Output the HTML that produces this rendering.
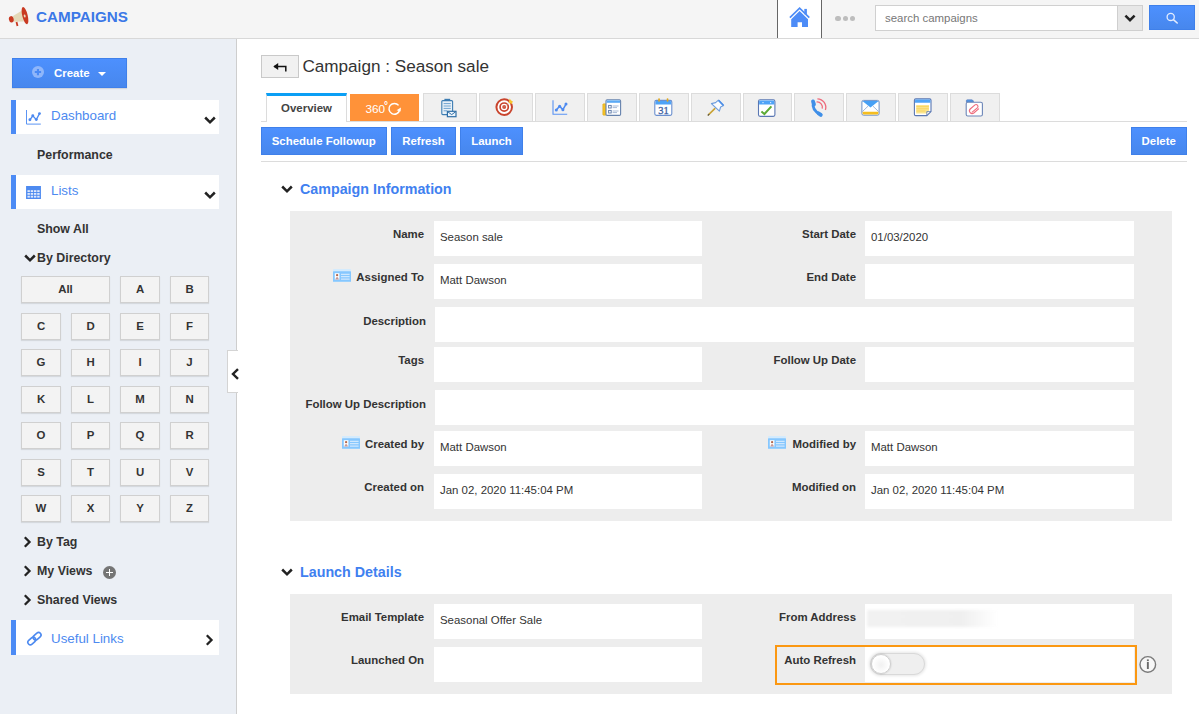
<!DOCTYPE html>
<html><head><meta charset="utf-8"><title>Campaigns</title>
<style>
*{box-sizing:border-box;margin:0;padding:0}
html,body{width:1199px;height:714px;overflow:hidden;background:#fff;font-family:"Liberation Sans",sans-serif;font-size:13px;color:#333}
.abs{position:absolute}
#hdr{position:absolute;left:0;top:0;width:1199px;height:39px;background:#f5f5f5;border-bottom:1px solid #d8d8d8}
#side{position:absolute;left:0;top:39px;width:237px;height:675px;background:#ebeff5;border-right:1px solid #cecece}
.brand{position:absolute;left:36px;top:6.6px;font-size:15.24px;font-weight:bold;color:#3b78e7;line-height:20px}
.nav{position:absolute;left:11px;width:207.5px;height:34.3px;background:#fff;border-left:5px solid #4c8bf5;color:#4d8af0;font-size:13.33px;line-height:34px}
.nav span{position:absolute;left:35px;top:-0.9px}
.sub{position:absolute;font-weight:bold;font-size:12.38px;color:#333;line-height:16px}
.ltr{position:absolute;height:27px;background:#f3f3f3;border:1px solid #d0d0d0;box-shadow:0 1px 1px rgba(0,0,0,.09);font-weight:bold;font-size:11.43px;color:#333;text-align:center;line-height:25px}
.btn{position:absolute;top:127px;height:28.3px;background:linear-gradient(#4d90fe,#4787ed);border:1px solid #3f80ea;color:#fff;font-weight:bold;font-size:11.43px;line-height:26px;text-align:center}
.tab{position:absolute;top:93px;height:28px;background:#f0f0f0;border:1px solid #dcdcdc;border-bottom:none}
.sec{position:absolute;left:300px;font-size:14.29px;font-weight:bold;color:#4080f0;line-height:18px}
.panel{position:absolute;left:290px;width:882px;background:#ededed}
.lbl{position:absolute;font-weight:bold;font-size:11.43px;color:#333;text-align:right;line-height:14px}
.fld{position:absolute;height:35px;background:#fff;font-size:11.43px;color:#333;line-height:32px;padding-left:6px}
</style></head><body>
<div id="hdr">
<svg class="abs" style="left:0px;top:0px" width="36" height="36" viewBox="0 0 36 36">
<path d="M12.6 16.2 L22 10.4 L23.8 21.6 L13.6 21.8 Z" fill="#e4d9b8"/>
<ellipse cx="11.3" cy="19.3" rx="2.4" ry="3.2" transform="rotate(-12 11.3 19.3)" fill="#c93a22"/>
<path d="M15.6 22.2 L17.4 21.8 L18.4 25.8 L16.6 26.3 Z" fill="#c93a22"/>
<ellipse cx="25" cy="15.6" rx="2.7" ry="8.9" transform="rotate(-14 25 15.6)" fill="#c93a22"/>
<ellipse cx="24.7" cy="16" rx="0.9" ry="1.6" transform="rotate(-14 24.7 16)" fill="#ecdcc0"/>
</svg>
<div class="brand">CAMPAIGNS</div>
<div class="abs" style="left:777px;top:0;width:45px;height:38px;background:#fff;border-left:1px solid #666;border-right:1px solid #666"></div>
<svg class="abs" style="left:786px;top:4px" width="28" height="28" viewBox="786 4 28 28">
<path d="M789.9 17.6 L799.6 8.2 L809.3 17.6" fill="none" stroke="#4d8cf7" stroke-width="1.7"/>
<path d="M799.6 11 L808 19.2 V27.1 H802 V22.2 H797.6 V27.1 H791.2 V19.2 Z" fill="#4d8cf7"/>
<rect x="804.3" y="8.9" width="2.6" height="5.4" fill="#4d8cf7"/>
</svg>
<div class="abs" style="left:835.3px;top:15.5px;width:5.6px;height:5.6px;border-radius:3px;background:#bdbdbd"></div>
<div class="abs" style="left:842.6px;top:15.5px;width:5.6px;height:5.6px;border-radius:3px;background:#bdbdbd"></div>
<div class="abs" style="left:849.9px;top:15.5px;width:5.6px;height:5.6px;border-radius:3px;background:#bdbdbd"></div>
<div class="abs" style="left:875px;top:5px;width:243px;height:26px;background:#fff;border:1px solid #d0d0d0;font-size:11.43px;color:#777;line-height:24px;padding-left:9px">search campaigns</div>
<div class="abs" style="left:1117px;top:5px;width:26px;height:26px;background:#e7e7e7;border:1px solid #cfcfcf"></div>
<svg class="abs" style="left:1123.7px;top:14.2px" width="12" height="9" viewBox="0 0 12 9"><path d="M1.4 1.6 L6 6.2 L10.6 1.6" fill="none" stroke="#222" stroke-width="2.5"/></svg>
<div class="abs" style="left:1149px;top:5px;width:46px;height:25px;background:linear-gradient(#4d90fe,#4787ed);border:1px solid #3f80ea"></div>
<svg class="abs" style="left:1165px;top:10.5px" width="15" height="15" viewBox="0 0 15 15"><circle cx="5.7" cy="5.9" r="3.6" fill="none" stroke="#e3ecfe" stroke-width="1.3"/><path d="M8.4 8.6 L12.2 12" stroke="#e3ecfe" stroke-width="1.6" stroke-linecap="round"/></svg>
</div>
<div id="side"></div>
<div class="abs" style="left:12px;top:58px;width:115px;height:30px;background:linear-gradient(#4d90fe,#4787ed);border:1px solid #3f80ea;box-shadow:0 1px 1px rgba(0,0,0,.1)"></div>
<div class="abs" style="left:32.3px;top:66.4px;width:11.3px;height:11.3px;border-radius:6px;background:#8fb6fa"></div>
<svg class="abs" style="left:32px;top:66px" width="12" height="12" viewBox="0 0 12 12"><path d="M2.8 6.05 H9.1 M5.95 2.9 V9.2" stroke="#4a8af5" stroke-width="2.1"/></svg>
<div class="abs" style="left:54px;top:65px;font-size:11.43px;font-weight:bold;color:#fff;line-height:16px">Create</div>
<div class="abs" style="left:98px;top:72px;width:0;height:0;border-left:4px solid transparent;border-right:4px solid transparent;border-top:4px solid #fff"></div>
<div class="nav" style="top:100px"><span>Dashboard</span></div>
<svg class="abs" style="left:24px;top:106px" width="20" height="22" viewBox="24 106 20 22">
<path d="M26.5 110 V124.1 H40.8" fill="none" stroke="#5b94f3" stroke-width="1"/>
<path d="M29.9 119.8 L32.8 115.8 L36.3 119.6 L39.5 113.6" fill="none" stroke="#4d8af0" stroke-width="1.3"/>
<g fill="#4d8af0"><circle cx="29.9" cy="119.8" r="1.45"/><circle cx="32.8" cy="115.8" r="1.45"/><circle cx="36.3" cy="119.6" r="1.45"/><circle cx="39.5" cy="113.6" r="1.45"/></g>
</svg>
<svg class="abs" style="left:204px;top:116px" width="12" height="9" viewBox="0 0 12 9"><path d="M1.2 1.5 L6 6.3 L10.8 1.5" fill="none" stroke="#222" stroke-width="2.5"/></svg>
<div class="sub" style="left:37px;top:146.5px">Performance</div>
<div class="nav" style="top:175px"><span>Lists</span></div>
<svg class="abs" style="left:26px;top:186px" width="15" height="13" viewBox="0 0 16 14">
<rect x="0" y="0" width="16" height="14" fill="#4d8af0"/>
<g fill="#dfe9fc"><rect x="1.5" y="4.5" width="2.6" height="2"/><rect x="5" y="4.5" width="2.6" height="2"/><rect x="8.5" y="4.5" width="2.6" height="2"/><rect x="12" y="4.5" width="2.6" height="2"/>
<rect x="1.5" y="7.5" width="2.6" height="2"/><rect x="5" y="7.5" width="2.6" height="2"/><rect x="8.5" y="7.5" width="2.6" height="2"/><rect x="12" y="7.5" width="2.6" height="2"/>
<rect x="1.5" y="10.5" width="2.6" height="2"/><rect x="5" y="10.5" width="2.6" height="2"/><rect x="8.5" y="10.5" width="2.6" height="2"/><rect x="12" y="10.5" width="2.6" height="2"/></g>
</svg>
<svg class="abs" style="left:204px;top:191px" width="12" height="9" viewBox="0 0 12 9"><path d="M1.2 1.5 L6 6.3 L10.8 1.5" fill="none" stroke="#222" stroke-width="2.5"/></svg>
<div class="sub" style="left:37px;top:221px">Show All</div>
<svg class="abs" style="left:24px;top:254px" width="12" height="9" viewBox="0 0 12 9"><path d="M1.2 1.5 L6 6.3 L10.8 1.5" fill="none" stroke="#222" stroke-width="2.5"/></svg>
<div class="sub" style="left:37px;top:250px">By Directory</div>
<div class="ltr" style="left:21px;top:276px;width:89px">All</div>
<div class="ltr" style="left:120px;top:276px;width:40px">A</div>
<div class="ltr" style="left:170px;top:276px;width:39px">B</div>
<div class="ltr" style="left:21px;top:313px;width:40px">C</div>
<div class="ltr" style="left:71px;top:313px;width:39px">D</div>
<div class="ltr" style="left:120px;top:313px;width:40px">E</div>
<div class="ltr" style="left:170px;top:313px;width:39px">F</div>
<div class="ltr" style="left:21px;top:349px;width:40px">G</div>
<div class="ltr" style="left:71px;top:349px;width:39px">H</div>
<div class="ltr" style="left:120px;top:349px;width:40px">I</div>
<div class="ltr" style="left:170px;top:349px;width:39px">J</div>
<div class="ltr" style="left:21px;top:386px;width:40px">K</div>
<div class="ltr" style="left:71px;top:386px;width:39px">L</div>
<div class="ltr" style="left:120px;top:386px;width:40px">M</div>
<div class="ltr" style="left:170px;top:386px;width:39px">N</div>
<div class="ltr" style="left:21px;top:422px;width:40px">O</div>
<div class="ltr" style="left:71px;top:422px;width:39px">P</div>
<div class="ltr" style="left:120px;top:422px;width:40px">Q</div>
<div class="ltr" style="left:170px;top:422px;width:39px">R</div>
<div class="ltr" style="left:21px;top:459px;width:40px">S</div>
<div class="ltr" style="left:71px;top:459px;width:39px">T</div>
<div class="ltr" style="left:120px;top:459px;width:40px">U</div>
<div class="ltr" style="left:170px;top:459px;width:39px">V</div>
<div class="ltr" style="left:21px;top:495px;width:40px">W</div>
<div class="ltr" style="left:71px;top:495px;width:39px">X</div>
<div class="ltr" style="left:120px;top:495px;width:40px">Y</div>
<div class="ltr" style="left:170px;top:495px;width:39px">Z</div>
<svg class="abs" style="left:23px;top:536px" width="9" height="12" viewBox="0 0 9 12"><path d="M1.8 1.3 L6.5 6 L1.8 10.7" fill="none" stroke="#222" stroke-width="2.3"/></svg>
<div class="sub" style="left:37px;top:534px">By Tag</div>
<svg class="abs" style="left:23px;top:565px" width="9" height="12" viewBox="0 0 9 12"><path d="M1.8 1.3 L6.5 6 L1.8 10.7" fill="none" stroke="#222" stroke-width="2.3"/></svg>
<div class="sub" style="left:37px;top:563px">My Views</div>
<div class="abs" style="left:103px;top:566px;width:13px;height:13px;border-radius:7px;background:#757575"></div>
<div class="abs" style="left:106px;top:571.7px;width:7px;height:1.6px;background:#fff"></div><div class="abs" style="left:108.7px;top:569px;width:1.6px;height:7px;background:#fff"></div>
<svg class="abs" style="left:23px;top:594px" width="9" height="12" viewBox="0 0 9 12"><path d="M1.8 1.3 L6.5 6 L1.8 10.7" fill="none" stroke="#222" stroke-width="2.3"/></svg>
<div class="sub" style="left:37px;top:592px">Shared Views</div>
<div class="nav" style="top:620px;height:35px"><span style="top:1.6px">Useful Links</span></div>
<svg class="abs" style="left:26px;top:630px" width="18" height="18" viewBox="26 630 18 18">
<g fill="none" stroke="#4d8af0" stroke-width="1.6">
<rect x="-4.4" y="-2.5" width="8.8" height="5" rx="2.5" transform="translate(37.1 636.2) rotate(-42)"/>
<rect x="-4.4" y="-2.5" width="8.8" height="5" rx="2.5" transform="translate(31.8 641) rotate(-42)"/>
</g></svg>
<svg class="abs" style="left:205px;top:634px" width="9" height="12" viewBox="0 0 9 12"><path d="M1.8 1.3 L6.5 6 L1.8 10.7" fill="none" stroke="#222" stroke-width="2.3"/></svg>
<div class="abs" style="left:227px;top:350px;width:11px;height:43px;background:#fff;border:1px solid #d4d4d4;border-right:none"></div>
<svg class="abs" style="left:230.6px;top:367.6px" width="9" height="12" viewBox="0 0 9 12"><path d="M7 1.2 L2 6 L7 10.8" fill="none" stroke="#222" stroke-width="2.4"/></svg>
<div class="abs" style="left:261px;top:55px;width:38px;height:23px;background:#f1f1f1;border:1px solid #c9c9c9"></div>
<svg class="abs" style="left:272.8px;top:61.6px" width="15" height="11" viewBox="0 0 15 11"><path d="M1 4.5 H12.8 V9.6" fill="none" stroke="#111" stroke-width="1.5"/><path d="M0.3 4.5 L5.2 1.1 V7.9 Z" fill="#111"/></svg>
<div class="abs" style="left:302.4px;top:54px;font-size:17.14px;color:#333;line-height:24px">Campaign : Season sale</div>
<div class="abs" style="left:261px;top:121px;width:926px;height:1px;background:#dcdcdc"></div>
<div class="abs" style="left:266px;top:93px;width:81px;height:29px;background:#fff;border:1px solid #dcdcdc;border-top:3px solid #0a9ff5;border-bottom:none;font-size:11.43px;font-weight:bold;color:#444;text-align:center;line-height:25px">Overview</div>
<div class="abs" style="left:350px;top:94px;width:69px;height:27px;background:#ff9239"></div>
<div class="abs" style="left:365.5px;top:102.3px;font-size:11.8px;color:#fff;line-height:14px">360</div>
<div class="abs" style="left:384px;top:100.5px;font-size:10px;font-weight:bold;color:#fff;line-height:10px">°</div>
<svg class="abs" style="left:387px;top:101px" width="16" height="16" viewBox="0 0 16 16"><path d="M11.6 4.4 A5.4 5.4 0 1 0 12.6 9.2" fill="none" stroke="#fff" stroke-width="1.5"/><path d="M9.6 9.2 L13.6 10.6 L13.9 6.6 Z" fill="#fff"/></svg>
<div class="tab" style="left:422.5px;width:54px"></div>
<div class="tab" style="left:479px;width:54px"></div>
<div class="tab" style="left:535px;width:50px"></div>
<div class="tab" style="left:587px;width:50px"></div>
<div class="tab" style="left:639px;width:50px"></div>
<div class="tab" style="left:690.5px;width:50px"></div>
<div class="tab" style="left:742.5px;width:49.5px"></div>
<div class="tab" style="left:794px;width:50px"></div>
<div class="tab" style="left:846px;width:50px"></div>
<div class="tab" style="left:898px;width:49.5px"></div>
<div class="tab" style="left:950px;width:50px"></div>
<svg class="abs" style="left:420px;top:93px" width="590" height="30" viewBox="420 93 590 30">
<!-- clipboard + mail -->
<g fill="none" stroke="#3d7db3" stroke-width="1.1">
<rect x="441.8" y="100.6" width="10.8" height="14" rx="1" fill="#e8f1f8"/>
<path d="M444.4 99.5 H450.2" stroke-width="1.4"/>
<path d="M443.6 103.6 H450.8 M443.6 106 H450.8 M443.6 108.4 H450.8 M443.6 110.8 H447" stroke="#6fa3cf" stroke-width="1"/>
<rect x="447.4" y="111.3" width="8.6" height="5.4" fill="#eef5fb" stroke="#2f6ea6" stroke-width="1.2"/>
<path d="M447.8 111.8 L451.7 114.6 L455.6 111.8" stroke="#2f6ea6" stroke-width="1"/>
</g>
<!-- bullseye -->
<g>
<circle cx="504.2" cy="107.1" r="7.8" fill="#fff" stroke="#c9442d" stroke-width="2"/>
<circle cx="504.2" cy="107.1" r="4.1" fill="#fff" stroke="#c9442d" stroke-width="1.7"/>
<circle cx="504.2" cy="107.1" r="2" fill="#cf5a44"/>
<path d="M505 106.4 L510 101.2" stroke="#d9b9a9" stroke-width="0.8"/>
<path d="M508.8 102.8 L509.6 98.6 L511.2 100.4 L512.9 101.6 L511.6 104 Z" fill="#f7c62f"/>
</g>
<!-- chart -->
<g fill="none" stroke="#4d8af0">
<path d="M553 100.3 V114.2 H567.2" stroke-width="1.1" stroke="#5a93f3"/>
<path d="M556.3 109.9 L559.6 106.2 L562.9 109.7 L566 104.1" stroke-width="1.5"/>
<g fill="#4d8af0" stroke="none"><circle cx="556.3" cy="109.9" r="1.5"/><circle cx="559.6" cy="106.2" r="1.5"/><circle cx="562.9" cy="109.7" r="1.5"/><circle cx="566" cy="104.1" r="1.5"/></g>
</g>
<!-- form -->
<g>
<rect x="602.8" y="103.8" width="3.4" height="11.4" rx="0.8" fill="#f6c123" stroke="#d9a514" stroke-width="0.5"/>
<rect x="606" y="99.8" width="14.6" height="15.6" rx="1.2" fill="#fff" stroke="#6682ad" stroke-width="1.1"/>
<path d="M606.6 100.4 H620 V102.8 H606.6 Z" fill="#5aa9f5"/>
<rect x="608.6" y="105.4" width="2.6" height="2.6" fill="#fff" stroke="#5a77a6" stroke-width="0.9"/>
<rect x="608.6" y="110.4" width="2.6" height="2.6" fill="#fff" stroke="#5a77a6" stroke-width="0.9"/>
<path d="M612.6 106 H618.6 M612.6 107.6 H617 M612.6 111 H618.6 M612.6 112.6 H617" stroke="#9fb3d1" stroke-width="0.9"/>
</g>
<!-- calendar -->
<g>
<rect x="654.8" y="100.4" width="17" height="15" rx="1.6" fill="#fff" stroke="#6a8fce" stroke-width="1.1"/>
<path d="M655.4 102 Q655.4 101 656.4 101 H670.2 Q671.2 101 671.2 102 V104.6 H655.4 Z" fill="#4fa3f7"/>
<rect x="658.2" y="98.3" width="1.7" height="3.4" rx="0.8" fill="#e0a820"/>
<rect x="666.7" y="98.3" width="1.7" height="3.4" rx="0.8" fill="#e0a820"/>
<text x="663.4" y="113.8" text-anchor="middle" font-family="Liberation Serif, serif" font-size="10.5" fill="#3f5f9f" stroke="#3f5f9f" stroke-width="0.3">31</text>
</g>
<!-- pin -->
<g>
<path d="M714.8 108.6 L708.4 114.9" stroke="#c9a335" stroke-width="1.6" stroke-linecap="round"/>
<path d="M708.9 114.4 L708.2 115.1" stroke="#555" stroke-width="1.2" stroke-linecap="round"/>
<path d="M718.4 100.2 L723.6 105.6 L720.6 107 L719.4 111.2 L711.4 103.6 L715.6 102.6 Z" fill="#fafcff" stroke="#6e9ddd" stroke-width="1.1" stroke-linejoin="round"/>
<path d="M718.6 100.4 L723.4 105.4" stroke="#4d8fe8" stroke-width="1.6"/>
</g>
<!-- task -->
<g>
<rect x="758.5" y="99.8" width="16.4" height="16.6" rx="1.6" fill="#fff" stroke="#5a77b3" stroke-width="1.1"/>
<path d="M759.1 101.4 Q759.1 100.4 760.1 100.4 H773.3 Q774.3 100.4 774.3 101.4 V104.6 H759.1 Z" fill="#4fa3f7"/>
<rect x="762.4" y="102" width="1.2" height="1.2" fill="#d8ebfd"/><rect x="770" y="102" width="1.2" height="1.2" fill="#d8ebfd"/>
<path d="M761.4 111.4 L764.4 114 L771.4 106.4" fill="none" stroke="#5dab36" stroke-width="2"/>
</g>
<!-- phone -->
<g>
<path d="M813.3 102 Q811.4 109.6 820.2 114.6" fill="none" stroke="#3f8fe8" stroke-width="2.6" stroke-linecap="round"/>
<path d="M813 101.4 L814 104.4" fill="none" stroke="#3f8fe8" stroke-width="3.8" stroke-linecap="round"/>
<path d="M818.4 113.2 L820.8 114.9" fill="none" stroke="#3f8fe8" stroke-width="3.8" stroke-linecap="round"/>
<path d="M816.6 102 A5.2 5.2 0 0 1 822.2 108.6" fill="none" stroke="#ee6b7c" stroke-width="1.3"/>
<path d="M817.4 98.8 A8.6 8.6 0 0 1 825.4 110" fill="none" stroke="#ee6b7c" stroke-width="1.3"/>
</g>
<!-- envelope -->
<g>
<rect x="861.9" y="100.4" width="17.2" height="14.8" rx="1.6" fill="#fff" stroke="#6c8fc6" stroke-width="1"/>
<path d="M862.6 111.8 H878.4 V113.6 Q878.4 114.6 877.4 114.6 H863.6 Q862.6 114.6 862.6 113.6 Z" fill="#f5bd1f"/>
<path d="M862.4 101 H878.6 L870.5 107.4 Z" fill="#47a0f5"/>
<path d="M862.4 111.6 L868 106.2 M878.6 111.6 L873 106.2" stroke="#8aa5cf" stroke-width="0.8"/>
</g>
<!-- note -->
<g>
<path d="M915.8 98.9 H929.6 Q931 98.9 931 100.3 V111.6 L926.8 115.6 H915.8 Q914.4 115.6 914.4 114.2 V100.3 Q914.4 98.9 915.8 98.9 Z" fill="#fff" stroke="#5a77b3" stroke-width="1.1"/>
<path d="M915 100.4 Q915 99.5 916 99.5 H929.4 Q930.4 99.5 930.4 100.4 V102.8 H915 Z" fill="#4fa3f7"/>
<path d="M916.2 105 H929 V111 L926.2 113.4 H916.2 Z" fill="#fbe58e"/>
<path d="M916.4 106.6 H928.8 M916.4 108.8 H928.8 M916.4 111 H925.4" stroke="#f7d35a" stroke-width="0.9"/>
<path d="M931 111.6 H926.8 V115.6" fill="none" stroke="#5a77b3" stroke-width="0.8"/>
</g>
<!-- folder -->
<g>
<path d="M966.4 102 V100.6 Q966.4 99.8 967.2 99.8 H971.8 Q972.6 99.8 973 100.6 L973.6 102 Z" fill="#4d97ea" stroke="#5a77b3" stroke-width="0.6"/>
<rect x="966.2" y="102.2" width="16.2" height="13.8" rx="1.6" fill="#fff" stroke="#6c86b8" stroke-width="1.1"/>
<g fill="none" stroke="#ee6b7c" stroke-width="1.1" stroke-linecap="round">
<path d="M972.2 112.2 L977.6 107.6 A1.9 1.9 0 0 0 975 104.9 L970.2 109 A2.7 2.7 0 0 0 973.8 113 L978.6 108.8"/>
</g>
</g>
</svg>

<div class="btn" style="left:261px;width:125.5px">Schedule Followup</div>
<div class="btn" style="left:391px;width:65px">Refresh</div>
<div class="btn" style="left:460px;width:63px">Launch</div>
<div class="btn" style="left:1131px;width:55.5px">Delete</div>
<div class="abs" style="left:261px;top:161px;width:926px;height:1px;background:#dcdcdc"></div>
<svg class="abs" style="left:281.3px;top:185px" width="12" height="9" viewBox="0 0 12 9"><path d="M1.2 1.5 L6 6.3 L10.8 1.5" fill="none" stroke="#222" stroke-width="2.5"/></svg>
<div class="sec" style="top:180px">Campaign Information</div>
<div class="panel" style="top:211px;height:309.5px"></div>
<div class="lbl" style="left:289px;width:135px;top:226.6px">Name</div>
<div class="fld" style="left:434px;top:221px;width:268px">Season sale</div>
<div class="lbl" style="left:289px;width:135px;top:269.6px">Assigned To</div>
<div class="fld" style="left:434px;top:264px;width:268px">Matt Dawson</div>
<svg class="abs" style="left:333px;top:269px" width="19" height="14" viewBox="0 0 19 14"><rect x="0" y="0" width="18" height="12.8" rx="0.6" fill="#d4ebfd"/><rect x="0" y="2.3" width="18" height="10.5" rx="0.6" fill="#86c7fe"/><rect x="1.8" y="4.2" width="4.6" height="6.4" fill="#fdfdfd"/><circle cx="4.1" cy="6.2" r="1.15" fill="#b4674b"/><path d="M2.3 10.5 Q4.1 5.6 5.9 10.5Z" fill="#c79a98"/><path d="M8 5.3 H16.6 M8 7.7 H16.6 M8 10.1 H16.6" stroke="#cfe8fe" stroke-width="1.3"/></svg>
<div class="lbl" style="left:289px;width:135px;top:352.6px">Tags</div>
<div class="fld" style="left:434px;top:347px;width:268px"></div>
<div class="lbl" style="left:289px;width:135px;top:436.6px">Created by</div>
<div class="fld" style="left:434px;top:431px;width:268px">Matt Dawson</div>
<svg class="abs" style="left:342px;top:436px" width="19" height="14" viewBox="0 0 19 14"><rect x="0" y="0" width="18" height="12.8" rx="0.6" fill="#d4ebfd"/><rect x="0" y="2.3" width="18" height="10.5" rx="0.6" fill="#86c7fe"/><rect x="1.8" y="4.2" width="4.6" height="6.4" fill="#fdfdfd"/><circle cx="4.1" cy="6.2" r="1.15" fill="#b4674b"/><path d="M2.3 10.5 Q4.1 5.6 5.9 10.5Z" fill="#c79a98"/><path d="M8 5.3 H16.6 M8 7.7 H16.6 M8 10.1 H16.6" stroke="#cfe8fe" stroke-width="1.3"/></svg>
<div class="lbl" style="left:289px;width:135px;top:479.6px">Created on</div>
<div class="fld" style="left:434px;top:474px;width:268px">Jan 02, 2020 11:45:04 PM</div>
<div class="lbl" style="left:720px;width:136px;top:226.6px">Start Date</div>
<div class="fld" style="left:865px;top:221px;width:269px">01/03/2020</div>
<div class="lbl" style="left:720px;width:136px;top:269.6px">End Date</div>
<div class="fld" style="left:865px;top:264px;width:269px"></div>
<div class="lbl" style="left:720px;width:136px;top:352.6px">Follow Up Date</div>
<div class="fld" style="left:865px;top:347px;width:269px"></div>
<div class="lbl" style="left:720px;width:136px;top:436.6px">Modified by</div>
<div class="fld" style="left:865px;top:431px;width:269px">Matt Dawson</div>
<svg class="abs" style="left:768px;top:436px" width="19" height="14" viewBox="0 0 19 14"><rect x="0" y="0" width="18" height="12.8" rx="0.6" fill="#d4ebfd"/><rect x="0" y="2.3" width="18" height="10.5" rx="0.6" fill="#86c7fe"/><rect x="1.8" y="4.2" width="4.6" height="6.4" fill="#fdfdfd"/><circle cx="4.1" cy="6.2" r="1.15" fill="#b4674b"/><path d="M2.3 10.5 Q4.1 5.6 5.9 10.5Z" fill="#c79a98"/><path d="M8 5.3 H16.6 M8 7.7 H16.6 M8 10.1 H16.6" stroke="#cfe8fe" stroke-width="1.3"/></svg>
<div class="lbl" style="left:720px;width:136px;top:479.6px">Modified on</div>
<div class="fld" style="left:865px;top:474px;width:269px">Jan 02, 2020 11:45:04 PM</div>
<div class="lbl" style="left:289px;width:137px;top:314px">Description</div>
<div class="fld" style="left:435px;top:307px;width:699px"></div>
<div class="lbl" style="left:289px;width:137px;top:397px">Follow Up Description</div>
<div class="fld" style="left:435px;top:390px;width:699px"></div>
<svg class="abs" style="left:281.3px;top:568px" width="12" height="9" viewBox="0 0 12 9"><path d="M1.2 1.5 L6 6.3 L10.8 1.5" fill="none" stroke="#222" stroke-width="2.5"/></svg>
<div class="sec" style="top:563px">Launch Details</div>
<div class="panel" style="top:594px;height:99.7px"></div>
<div class="lbl" style="left:289px;width:135px;top:610px">Email Template</div>
<div class="fld" style="left:434px;top:604px;width:268px;height:34.5px">Seasonal Offer Sale</div>
<div class="lbl" style="left:289px;width:135px;top:653px">Launched On</div>
<div class="fld" style="left:434px;top:646.7px;width:268px"></div>
<div class="lbl" style="left:720px;width:136px;top:610px">From Address</div>
<div class="fld" style="left:865px;top:604px;width:269px;height:34.5px"></div>
<div class="abs" style="left:867px;top:609.5px;width:131px;height:17.5px;background:linear-gradient(90deg,#f1f1f1 0%,#efefef 72%,#fff 100%);filter:blur(1.6px)"></div>
<div class="fld" style="left:865px;top:646.7px;width:269px"></div>
<div class="lbl" style="left:720px;width:136px;top:653px">Auto Refresh</div>
<div class="abs" style="left:775px;top:645px;width:361.5px;height:40px;border:2.3px solid #fb9812"></div>
<div class="abs" style="left:870px;top:653.4px;width:54.8px;height:21.8px;border-radius:11px;background:#efefef;border:1px solid #d9d9d9;box-shadow:0 0 3px 1px rgba(0,0,0,.10)"></div>
<div class="abs" style="left:871.4px;top:654.4px;width:19.8px;height:19.8px;border-radius:10px;background:radial-gradient(circle at 50% 55%,#f1f1f1 0%,#fbfbfb 45%,#fff 60%);border:1px solid #cfcfcf;box-shadow:0 0 2px rgba(0,0,0,.2)"></div>
<svg class="abs" style="left:1138px;top:654px" width="20" height="20" viewBox="1138 654 20 20"><circle cx="1147.8" cy="664.4" r="7.8" fill="#f7f7f7" stroke="#7a7a7a" stroke-width="1.4"/><rect x="1146.9" y="662" width="1.9" height="7" fill="#6a6a6a"/><rect x="1146.9" y="659.4" width="1.9" height="1.7" fill="#6a6a6a"/></svg>
</body></html>
